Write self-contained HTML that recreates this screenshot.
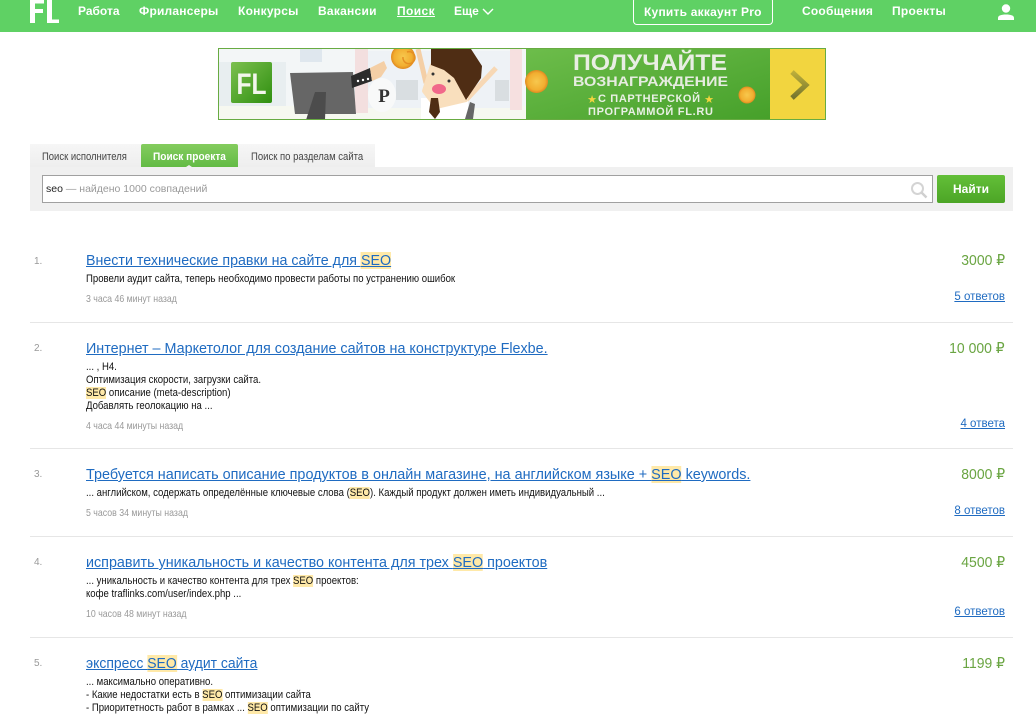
<!DOCTYPE html>
<html lang="ru"><head><meta charset="utf-8"><title>Поиск проекта</title>
<style>
html,body{margin:0;padding:0;background:#fff;width:1036px;height:715px;overflow:hidden}
body{position:relative;font-family:"Liberation Sans","DejaVu Sans",sans-serif;color:#000}
.a{position:absolute;white-space:nowrap}
header{position:absolute;left:0;top:0;width:1036px;height:32px;background:#5fd164}
.n{position:absolute;top:3px;line-height:16px;font-size:12px;font-weight:bold;color:#fff;white-space:nowrap}
.t{position:absolute;left:86px;font-size:15px;line-height:18px;color:#1f6bc1;text-decoration:underline;white-space:nowrap;transform-origin:0 0}
.d{position:absolute;left:86px;font-size:11px;line-height:13px;color:#111;white-space:nowrap;transform:scaleX(.87);transform-origin:0 0}
.m{position:absolute;left:86px;font-size:10.5px;line-height:13px;color:#999;white-space:nowrap;transform:scaleX(.835);transform-origin:0 0}
.i{position:absolute;left:34px;font-size:10px;line-height:13px;color:#999}
.p{position:absolute;right:31px;font-size:15px;line-height:18px;color:#6aa542;white-space:nowrap;transform:scaleX(.93);transform-origin:100% 0}
.o{position:absolute;right:31px;font-size:11.5px;line-height:14px;color:#1f6bc1;text-decoration:underline;white-space:nowrap}
.l{position:absolute;left:30px;width:983px;height:1px;background:#e6e6e6}
.tb{position:absolute;top:151px;font-size:11px;line-height:13px;transform-origin:0 0;white-space:nowrap}
mark{background:#ffe9a8;color:inherit}
</style></head><body>
<header>
<svg class="a" style="left:29px;top:0" width="31" height="24" viewBox="0 0 31 24"><path fill="#fff" d="M1 0h5v23H1zM6 0h9v3.500H6zM6 9h8v4H6zM18 0h5v19.500h7V23H18z"/></svg>
<span class="n" style="left:78px">Работа</span>
<span class="n" style="left:139px;letter-spacing:.2px">Фрилансеры</span>
<span class="n" style="left:238px;letter-spacing:.25px">Конкурсы</span>
<span class="n" style="left:318px;letter-spacing:.25px">Вакансии</span>
<span class="n" style="left:397px;letter-spacing:.4px;text-decoration:underline">Поиск</span>
<span class="n" style="left:454px">Еще</span>
<svg class="a" style="left:482px;top:8px" width="12" height="8" viewBox="0 0 12 8"><path fill="none" stroke="#fff" stroke-width="1.4" d="M1 1l5 5 5-5"/></svg>
<div class="a" style="left:633px;top:-3px;width:138px;height:26px;border:1px solid #fff;border-radius:4px"></div>
<span class="n" style="left:644px;top:4px;letter-spacing:.22px">Купить аккаунт Pro</span>
<span class="n" style="left:802px;letter-spacing:.22px">Сообщения</span>
<span class="n" style="left:892px;letter-spacing:.28px">Проекты</span>
<svg class="a" style="left:998px;top:4px" width="16" height="16" viewBox="0 0 16 16"><circle cx="8" cy="4.500" r="4.200" fill="#fff"/><path fill="#fff" d="M0 16v-2c0-2.500 3-3.500 8-3.500s8 1 8 3.500v2z"/></svg>
</header>

<svg class="a" style="left:218px;top:48px" width="608" height="72" viewBox="0 0 608 72">
<defs>
<linearGradient id="g1" x1="0" y1="0" x2="1" y2="1"><stop offset="0" stop-color="#7cc04f"/><stop offset="1" stop-color="#2f8f10"/></linearGradient>
<linearGradient id="g2" x1="0" y1="0" x2="1" y2="1"><stop offset="0" stop-color="#6dbd4b"/><stop offset="1" stop-color="#46a02a"/></linearGradient>
<linearGradient id="g3" x1="0" y1="0" x2="0" y2="1"><stop offset="0" stop-color="#bcae3a"/><stop offset="1" stop-color="#75752e"/></linearGradient>
<radialGradient id="c1"><stop offset="0" stop-color="#f7c84e"/><stop offset=".75" stop-color="#f2ae30"/><stop offset="1" stop-color="#e08a20"/></radialGradient>
</defs>
<rect width="608" height="72" fill="#f3f6f7"/>
<rect x="0" y="14" width="68" height="50" fill="#e8eef0"/>
<rect x="82" y="1" width="22" height="13" fill="#dfe7ee"/>
<rect x="0" y="58" width="308" height="14" fill="#f6f8f0"/>
<rect x="150" y="3" width="143" height="57" fill="#eef2f6"/>
<rect x="137" y="1" width="13" height="64" fill="#f3dfdf"/>
<rect x="292" y="1" width="12" height="61" fill="#f6e0e0"/>
<rect x="178" y="32" width="22" height="20" fill="#d9dee1"/>
<rect x="277" y="32" width="14" height="21" fill="#d9dee1"/>
<rect x="13" y="14" width="41" height="41" rx="2" fill="url(#g1)"/>
<text x="33.500" y="46" text-anchor="middle" font-family="Liberation Sans" font-weight="bold" font-size="30" fill="#f2f6ec" textLength="30" lengthAdjust="spacingAndGlyphs">FL</text>
<path fill="#666" d="M72 25l63-1 3 42H77z"/><path fill="#4c4c4c" d="M97 44h11l-1 28H88z"/>
<path fill="#2c2c2c" d="M133 28l19-8 2 13-20 7z"/><path fill="#f4cfa6" d="M152 20l14-7 3 7-6 9-9 4z"/>
<circle cx="140" cy="33" r="1.200" fill="#fff"/><circle cx="145" cy="32" r="1.200" fill="#fff"/><circle cx="150" cy="31" r="1.200" fill="#fff"/>
<ellipse cx="164" cy="47" rx="14" ry="17" fill="#f8f9f9"/>
<text x="166" y="54" text-anchor="middle" font-family="Liberation Serif" font-weight="bold" font-size="19" fill="#333">Р</text>
<circle cx="185" cy="9" r="12" fill="url(#c1)"/>
<path d="M185 9a6 6 0 1 0 4-5" fill="none" stroke="#e58f22" stroke-width="1.500"/>
<path d="M200 1l8 34" stroke="#f4cfa6" stroke-width="5" fill="none"/>
<path d="M248 52l30-32" stroke="#f7d8b5" stroke-width="5" fill="none"/>
<path fill="#fff" d="M203 50h47v22h-47z"/>
<path fill="#f9dfbd" stroke="#f9dfbd" stroke-width="4" stroke-linejoin="round" d="M214 17l12 3 10 10 12 22-30 7-12-16z"/>
<path fill="#4f2d14" d="M213 1h40l11 17-1 12-15 22-12-22-10-8-13-5z"/>
<ellipse cx="221" cy="41" rx="7" ry="5" fill="#f1688a"/>
<circle cx="215" cy="26" r="1.500" fill="#333"/><circle cx="231" cy="33" r="1.500" fill="#333"/>
<path fill="#4f2d14" d="M213 50h7l2 14-5 7-6-7z"/>
<path fill="#666" d="M252 54l5 2-2 15h-8z"/>
<rect x="308" y="0" width="244" height="72" fill="url(#g2)"/>
<rect x="552" y="0" width="56" height="72" fill="#f2d53f"/>
<circle cx="318.500" cy="33.500" r="11.500" fill="url(#c1)"/>
<circle cx="529" cy="47" r="8.500" fill="url(#c1)"/>
<text x="432" y="22" text-anchor="middle" font-family="Liberation Sans" font-weight="bold" font-size="22.500" fill="#e9eee4" textLength="154" lengthAdjust="spacingAndGlyphs">ПОЛУЧАЙТЕ</text>
<text x="432.500" y="38" text-anchor="middle" font-family="Liberation Sans" font-weight="bold" font-size="13.800" fill="#e6ece0" textLength="155" lengthAdjust="spacingAndGlyphs">ВОЗНАГРАЖДЕНИЕ</text>
<text x="431" y="54" text-anchor="middle" font-family="Liberation Sans" font-weight="bold" font-size="11" fill="#e9f0e4" textLength="102" lengthAdjust="spacing">С ПАРТНЕРСКОЙ</text>
<text x="374" y="55" text-anchor="middle" font-family="DejaVu Sans" font-size="11" fill="#f2d53f">★</text>
<text x="491" y="55" text-anchor="middle" font-family="DejaVu Sans" font-size="11" fill="#f2d53f">★</text>
<text x="432.500" y="67" text-anchor="middle" font-family="Liberation Sans" font-weight="bold" font-size="11" fill="#e9f0e4" textLength="125" lengthAdjust="spacing">ПРОГРАММОЙ FL.RU</text>
<path d="M574 24l14 13-14 13" fill="none" stroke="url(#g3)" stroke-width="5"/>
<rect x=".5" y=".5" width="607" height="71" fill="none" stroke="#68ab42"/>
</svg>

<div class="a" style="left:30px;top:144px;width:345px;height:23px;background:linear-gradient(#f6f6f6,#eeeeee)"></div>
<div class="a" style="left:141px;top:144px;width:97px;height:23px;background:linear-gradient(#84cc5e,#63bb45);border-radius:2px 2px 0 0"></div>
<div class="a" style="left:186px;top:165px;width:0;height:0;border:3px solid transparent;border-top:0;border-bottom:2px solid #f0f0f0"></div>
<span class="tb" style="left:42px;color:#444;transform:scaleX(.86)">Поиск исполнителя</span>
<span class="tb" style="left:153px;color:#fff;font-weight:bold;transform:scaleX(.92)">Поиск проекта</span>
<span class="tb" style="left:251px;color:#444;transform:scaleX(.865)">Поиск по разделам сайта</span>
<div class="a" style="left:30px;top:167px;width:983px;height:44px;background:#f0f0f0"></div>
<div class="a" style="left:42px;top:175px;width:889px;height:26px;border:1px solid #a0a0a0;background:#fff"></div>
<span class="a" style="left:46px;top:183px;font-size:10.500px;line-height:13px;color:#999"><span style="color:#222">seo</span> — найдено 1000 совпадений</span>
<svg class="a" style="left:910px;top:181px" width="18" height="18" viewBox="0 0 18 18"><circle cx="7.500" cy="7.500" r="5.500" fill="none" stroke="#d4d4d4" stroke-width="2"/><path d="M11.500 11.500l5 5" stroke="#d0d0d0" stroke-width="2.500"/></svg>
<div class="a" style="left:937px;top:175px;width:68px;height:28px;border-radius:2px;background:linear-gradient(#63bf38,#4ca526);color:#fff;font-size:12px;font-weight:bold;line-height:28px;text-align:center">Найти</div>

<span class="i" style="top:255px">1.</span>
<a class="t" style="top:252px;transform:scaleX(.95)">Внести технические правки на сайте для <mark>SEO</mark></a>
<span class="p" style="top:252px">3000 ₽</span>
<div class="d" style="top:273px">Провели аудит сайта, теперь необходимо провести работы по устранению ошибок</div>
<div class="m" style="top:293px">3 часа 46 минут назад</div>
<a class="o" style="top:290px">5 ответов</a>
<div class="l" style="top:322px"></div>

<span class="i" style="top:342px">2.</span>
<a class="t" style="top:340px;transform:scaleX(.956)">Интернет – Маркетолог для создание сайтов на конструктуре Flexbe.</a>
<span class="p" style="top:340px">10 000 ₽</span>
<div class="d" style="top:361px">... , H4.<br>Оптимизация скорости, загрузки сайта.<br><mark>SEO</mark> описание (meta-description)<br>Добавлять геолокацию на ...</div>
<div class="m" style="top:420px">4 часа 44 минуты назад</div>
<a class="o" style="top:417px">4 ответа</a>
<div class="l" style="top:448px"></div>

<span class="i" style="top:468px">3.</span>
<a class="t" style="top:466px;transform:scaleX(.96)">Требуется написать описание продуктов в онлайн магазине, на английском языке + <mark>SEO</mark> keywords.</a>
<span class="p" style="top:466px">8000 ₽</span>
<div class="d" style="top:487px">... английском, содержать определённые ключевые слова (<mark>SEO</mark>). Каждый продукт должен иметь индивидуальный ...</div>
<div class="m" style="top:507px">5 часов 34 минуты назад</div>
<a class="o" style="top:504px">8 ответов</a>
<div class="l" style="top:536px"></div>

<span class="i" style="top:556px">4.</span>
<a class="t" style="top:554px;transform:scaleX(.956)">исправить уникальность и качество контента для трех <mark>SEO</mark> проектов</a>
<span class="p" style="top:554px">4500 ₽</span>
<div class="d" style="top:575px">... уникальность и качество контента для трех <mark>SEO</mark> проектов:<br>кофе traflinks.com/user/index.php ...</div>
<div class="m" style="top:608px">10 часов 48 минут назад</div>
<a class="o" style="top:605px">6 ответов</a>
<div class="l" style="top:637px"></div>

<span class="i" style="top:657px">5.</span>
<a class="t" style="top:655px;transform:scaleX(.93)">экспресс <mark>SEO</mark> аудит сайта</a>
<span class="p" style="top:655px">1199 ₽</span>
<div class="d" style="top:676px">... максимально оперативно.<br>- Какие недостатки есть в <mark>SEO</mark> оптимизации сайта<br>- Приоритетность работ в рамках ... <mark>SEO</mark> оптимизации по сайту</div>
</body></html>
